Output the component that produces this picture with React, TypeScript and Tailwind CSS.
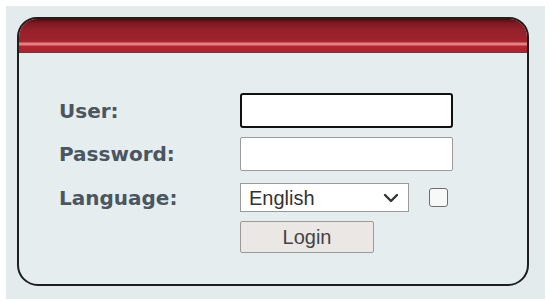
import React from "react";

export default function App() {
  return (
    <div className="w-[550px] h-[303px] bg-white overflow-hidden">
      <div className="mx-[6px] mt-[6px] w-[539px] h-[293px] bg-[#e4ebed] pt-[11px] pl-[11px]">
        <div className="w-[512px] h-[269px] rounded-t-[20px] rounded-b-[21px] border-2 border-[#1e1e1e] bg-[#e6edef] overflow-hidden">
          <div className="h-[34px] bg-[linear-gradient(to_bottom,#4a0c10_0px,#7a1a22_4px,#932029_10px,#9e232d_21px,#a8262f_23px,#e47f86_24px,#e47f86_26px,#b2262f_27px,#ad2530_33px,#7c2b2f_34px)]" />
          <div
            className="pt-[40px] pl-[40px] flex flex-col"
            style={{ fontFamily: '"DejaVu Sans", Verdana, sans-serif' }}
          >
            <div className="flex items-center h-[35px]">
              <div className="w-[181px] text-[20px] font-bold text-[#4a5660]">User:</div>
              <div className="w-[213px] h-[35px] border-2 border-[#111] rounded-[3px] bg-white" />
            </div>
            <div className="flex items-center h-[34px] mt-[9px]">
              <div className="w-[181px] text-[20px] font-bold text-[#4a5660]">Password:</div>
              <div className="w-[213px] h-[34px] border border-[#9a9a9a] rounded-[2px] bg-white" />
            </div>
            <div className="flex items-center h-[29px] mt-[12px]">
              <div className="w-[181px] text-[20px] font-bold text-[#4a5660]">Language:</div>
              <div
                className="w-[169px] h-[29px] border border-[#9a9a9a] bg-white flex items-center pl-[8px] pr-[8px] justify-between text-[20px] text-[#333]"
                style={{ fontFamily: '"Liberation Sans", Arial, sans-serif' }}
              >
                <span className="leading-none">English</span>
                <svg width="16" height="10" viewBox="0 0 16 10" className="mr-[1px]">
                  <polyline points="2,2 8,8 14,2" fill="none" stroke="#333" strokeWidth="2.4" strokeLinecap="round" strokeLinejoin="round" />
                </svg>
              </div>
              <div className="ml-[20px] w-[19px] h-[19px] border-[1.5px] border-[#6f6f6f] rounded-[3px] bg-[#f7f9f9]" />
            </div>
            <div className="flex items-center mt-[9px]">
              <div className="w-[181px]" />
              <div
                className="w-[134px] h-[32px] border border-[#9a9a9a] rounded-[2px] bg-[#ebe7e5] flex items-center justify-center text-[20px] text-[#444]"
                style={{ fontFamily: '"Liberation Sans", Arial, sans-serif' }}
              >
                Login
              </div>
            </div>
          </div>
        </div>
      </div>
    </div>
  );
}
